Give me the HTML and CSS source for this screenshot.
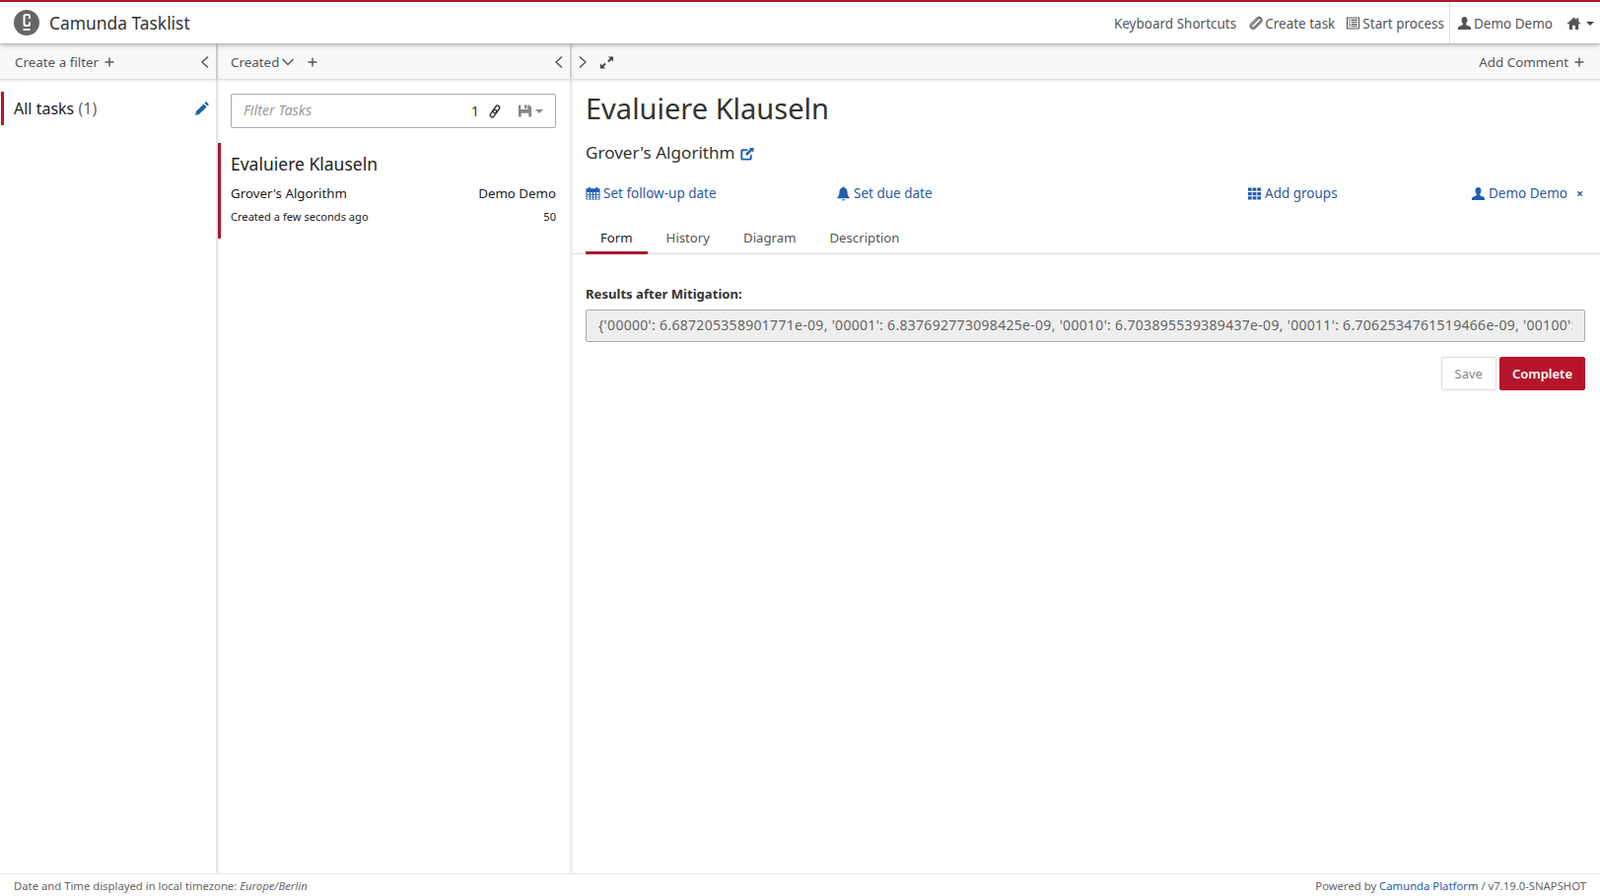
FILE: index.html
```html
<!DOCTYPE html>
<html lang="en">
<head>
  <meta charset="utf-8">
  <meta name="viewport" content="width=device-width, initial-scale=1.0">
  <title>Camunda Tasklist</title>
  <link rel="stylesheet" href="styles.css">
</head>
<body>
  <svg class="sprites" width="0" height="0">
    <symbol id="i-clip" viewBox="0 0 16 16"><g fill="none" stroke="currentColor" stroke-width="1.100"><rect x="-1.500" y="-7" width="3.200" height="13" rx="1.600" transform="translate(8.500 8) rotate(45)"/><rect x="-3.200" y="-7.800" width="6.400" height="15.300" rx="3.200" transform="translate(8.500 8) rotate(45)"/></g></symbol>
    <symbol id="i-list" viewBox="0 0 16 16"><path fill-rule="evenodd" d="M1 1.500h14v13H1zM2.200 2.700v10.600h11.600V2.700z"/><path d="M3.500 4h1.500v1.200H3.500zM6 4h6.500v1.200H6zM3.500 6.300h1.500v1.200H3.500zM6 6.300h6.500v1.200H6zM3.500 8.600h1.500v1.200H3.500zM6 8.600h6.500v1.200H6zM3.500 10.900h1.500v1.200H3.500zM6 10.900h6.500v1.200H6z"/></symbol>
    <symbol id="i-user" viewBox="0 0 16 16"><path d="M8 1c2 0 3.200 1.500 3.200 3.600 0 1.500-.6 3-1.500 3.800v1.200c0 .7 4.800 1.500 5.300 3.400V15H1v-2c.5-1.900 5.300-2.700 5.300-3.400V8.400C5.400 7.600 4.800 6.100 4.800 4.600 4.800 2.500 6 1 8 1z"/></symbol>
    <symbol id="i-home" viewBox="0 0 16 16"><path d="M8 1.500l3 2.800V2.500h2.200v3.900l2.500 2.300H13V15H9.500v-4.500h-3V15H3V8.700H.3z"/></symbol>
    <symbol id="i-pencil" viewBox="0 0 16 16"><path d="M12 1l3 3-1.600 1.600-3-3zM9.600 3.400l3 3-7.400 7.400L1 15l1.200-4.200z"/></symbol>
    <symbol id="i-link" viewBox="0 0 16 16"><g fill="none" stroke="currentColor" stroke-width="1.400"><rect x="-2.100" y="-6.600" width="4.200" height="8.200" rx="2.100" transform="translate(8 8) rotate(35)"/><rect x="-2.100" y="-1.600" width="4.200" height="8.200" rx="2.100" transform="translate(8 8) rotate(35)"/></g></symbol>
    <symbol id="i-save" viewBox="0 0 16 16"><path fill-rule="evenodd" d="M1 1.500h2.500v5h7.500v-5h1.500L15 4v10.500H1zM4 10.500v4h8v-4z"/><path d="M7.500 1.500H10v4H7.500z"/></symbol>
    <symbol id="i-expand" viewBox="0 0 16 16"><path d="M9.500 1.500H15V7l-2-2-2.700 2.700-1.500-1.500L11.500 3.500zM6.500 14.500H1V9l2 2 2.700-2.700 1.500 1.500L4.500 12.500z"/></symbol>
    <symbol id="i-share" viewBox="0 0 16 16"><path d="M3.500 2.500h6.200L8 4.500H4c-.3 0-.5.200-.5.500v7c0 .3.200.5.500.5h7c.3 0 .5-.2.500-.5V9.500l2-2V12.500c0 1.100-.9 2-2 2H3.500c-1.100 0-2-.9-2-2v-8c0-1.100.9-2 2-2z"/><path d="M10.500 1H15.500V6L13.700 4.300 8.500 9.500 6.500 7.500 11.700 2.300z"/></symbol>
    <symbol id="i-calendar" viewBox="0 0 16 16"><path fill-rule="evenodd" d="M3 1h2v1.500h6V1h2v1.500h2.500v12H.5v-12H3zM1.500 6.500v1.800h2.800V6.500zM5.300 6.500v1.800h2.200V6.500zM8.500 6.500v1.800h2.200V6.500zM11.700 6.500v1.800h2.800V6.500zM1.500 9.300v1.800h2.800V9.300zM5.300 9.300v1.800h2.200V9.300zM8.500 9.300v1.800h2.200V9.300zM11.700 9.300v1.800h2.800V9.300zM1.500 12.100v1.500h2.800v-1.500zM5.300 12.100v1.500h2.200v-1.500zM8.500 12.100v1.500h2.200v-1.500zM11.700 12.100v1.500h2.800v-1.500z"/></symbol>
    <symbol id="i-bell" viewBox="0 0 16 16"><path d="M8 .5c.7 0 1.200.5 1.200 1.200 2 .5 3.100 2.200 3.100 4.300 0 3 .7 4.500 2.200 6v1H1.500v-1c1.500-1.500 2.200-3 2.200-6 0-2.100 1.100-3.800 3.100-4.300C6.800 1 7.300.5 8 .5zM6.300 14.200h3.400C9.500 15.100 8.800 15.500 8 15.500s-1.500-.4-1.700-1.300z"/></symbol>
    <symbol id="i-th" viewBox="0 0 16 16"><path d="M1 1.500h4v3.500H1zM6 1.500h4v3.500H6zM11 1.500h4v3.500h-4zM1 6.300h4v3.500H1zM6 6.300h4v3.500H6zM11 6.300h4v3.500h-4zM1 11h4v3.500H1zM6 11h4v3.500H6zM11 11h4v3.500h-4z"/></symbol>
    <symbol id="i-plus" viewBox="0 0 12 12"><path d="M6 1.500v9M1.500 6h9" fill="none" stroke="currentColor" stroke-width="1.400"/></symbol>
    <symbol id="i-left" viewBox="0 0 12 14"><path d="M9 1.500 3 7l6 5.500" fill="none" stroke="currentColor" stroke-width="1.400"/></symbol>
    <symbol id="i-right" viewBox="0 0 12 14"><path d="M3 1.500 9 7l-6 5.500" fill="none" stroke="currentColor" stroke-width="1.400"/></symbol>
    <symbol id="i-down" viewBox="0 0 14 10"><path d="M1.500 2 7 7.500 12.500 2" fill="none" stroke="currentColor" stroke-width="1.500"/></symbol>
  </svg>

  <header class="topbar">
    <div class="brand">
      <svg class="logo" viewBox="0 0 26 26">
        <circle cx="13" cy="13" r="13" fill="#666"/>
        <path d="M16 9V6.500C16 5.500 15.400 5 14.500 5H12c-1 0-1.500.6-1.500 1.500v8c0 1 .6 1.500 1.500 1.500h2.500c1 0 1.500-.6 1.500-1.500V12.500" fill="none" stroke="#fff" stroke-width="2"/>
        <path d="M9.500 20h7" stroke="#fff" stroke-width="1.800"/>
      </svg>
      <span class="brand-name">Camunda Tasklist</span>
    </div>
    <nav class="topnav">
      <a class="topnav-item">Keyboard Shortcuts</a>
      <a class="topnav-item"><svg class="icon"><use href="#i-clip"/></svg>Create task</a>
      <a class="topnav-item topnav-last"><svg class="icon"><use href="#i-list"/></svg>Start process</a>
      <a class="topnav-item topnav-user"><svg class="icon"><use href="#i-user"/></svg>Demo Demo</a>
      <a class="topnav-item topnav-home"><svg class="icon icon-home"><use href="#i-home"/></svg><span class="caret"></span></a>
    </nav>
  </header>

  <main class="columns">
    <section class="col col-filters">
      <div class="toolbar">
        <span class="toolbar-link">Create a filter<svg class="icon-plus"><use href="#i-plus"/></svg></span>
        <svg class="icon-chev"><use href="#i-left"/></svg>
      </div>
      <div class="filter-row">
        <span class="filter-name">All tasks <span class="filter-count">(1)</span></span>
        <svg class="icon icon-edit"><use href="#i-pencil"/></svg>
      </div>
    </section>

    <section class="col col-list">
      <div class="toolbar">
        <span class="toolbar-link">Created<svg class="icon-down"><use href="#i-down"/></svg><svg class="icon-plus icon-plus-gap"><use href="#i-plus"/></svg></span>
        <svg class="icon-chev"><use href="#i-left"/></svg>
      </div>
      <div class="search-wrap">
        <div class="search">
          <span class="search-hint">Filter Tasks</span>
          <span class="search-num">1</span>
          <svg class="icon icon-link"><use href="#i-link"/></svg>
          <svg class="icon icon-save"><use href="#i-save"/></svg>
          <span class="caret caret-light"></span>
        </div>
      </div>
      <article class="task">
        <h3 class="task-title">Evaluiere Klauseln</h3>
        <div class="task-line">
          <span>Grover's Algorithm</span>
          <span>Demo Demo</span>
        </div>
        <div class="task-line task-meta">
          <span>Created a few seconds ago</span>
          <span>50</span>
        </div>
      </article>
    </section>

    <section class="col col-detail">
      <div class="toolbar">
        <span class="toolbar-left">
          <svg class="icon-chev"><use href="#i-right"/></svg>
          <svg class="icon icon-expand"><use href="#i-expand"/></svg>
        </span>
        <span class="toolbar-link">Add Comment<svg class="icon-plus"><use href="#i-plus"/></svg></span>
      </div>
      <div class="detail">
        <h1 class="detail-title">Evaluiere Klauseln</h1>
        <div class="detail-process">Grover's Algorithm<svg class="icon icon-share"><use href="#i-share"/></svg></div>
        <div class="detail-links">
          <a class="link"><svg class="icon"><use href="#i-calendar"/></svg>Set follow-up date</a>
          <a class="link"><svg class="icon icon-bell"><use href="#i-bell"/></svg>Set due date</a>
          <a class="link"><svg class="icon"><use href="#i-th"/></svg>Add groups</a>
          <a class="link"><svg class="icon"><use href="#i-user"/></svg>Demo Demo<span class="link-x">×</span></a>
        </div>
      </div>
      <ul class="tabs">
        <li class="tab tab-active">Form</li>
        <li class="tab">History</li>
        <li class="tab">Diagram</li>
        <li class="tab">Description</li>
      </ul>
      <form class="task-form">
        <label class="form-label" for="results">Results after Mitigation:</label>
        <input class="form-input" id="results" disabled value="{'00000': 6.687205358901771e-09, '00001': 6.837692773098425e-09, '00010': 6.703895539389437e-09, '00011': 6.7062534761519466e-09, '00100': 6.71e-09, '00101': 6.69e-09}">
        <div class="form-actions">
          <button class="btn btn-save" type="button" disabled>Save</button>
          <button class="btn btn-complete" type="button">Complete</button>
        </div>
      </form>
    </section>
  </main>

  <footer class="footer">
    <span>Date and Time displayed in local timezone: <em>Europe/Berlin</em></span>
    <span>Powered by <a class="footer-link">Camunda Platform</a> / v7.19.0-SNAPSHOT</span>
  </footer>
</body>
</html>
```

FILE: styles.css
```css
* {
  box-sizing: border-box;
}

body {
  margin: 0;
  height: 100vh;
  display: flex;
  flex-direction: column;
  overflow: hidden;
  background-color: #fff;
  color: #333;
  font-family: "Noto Sans", sans-serif;
  font-size: 13.500px;
}

.sprites {
  position: absolute;
}

.icon {
  width: 15px;
  height: 15px;
  margin-right: 2px;
  fill: currentColor;
  vertical-align: -3px;
}

.caret {
  display: inline-block;
  width: 0;
  height: 0;
  margin-left: 3px;
  border-top: 4px solid #444;
  border-left: 4px solid transparent;
  border-right: 4px solid transparent;
  vertical-align: 2px;
}

.caret-light {
  border-top-color: #8a8a8a;
}

/* top bar */
.topbar {
  height: 44px;
  flex: none;
  display: flex;
  justify-content: space-between;
  align-items: stretch;
  position: relative;
  z-index: 3;
  background-color: #fff;
  border-top: 2px solid #b5152b;
  box-shadow: 0 1px 5px rgba(0, 0, 0, 0.4);
}

.brand {
  display: flex;
  align-items: center;
  padding-left: 14px;
}

.logo {
  width: 26px;
  height: 26px;
  margin-right: 10px;
}

.brand-name {
  font-size: 17.400px;
  color: #333;
}

.topnav {
  display: flex;
  align-items: center;
  color: #555;
}

.topnav-item {
  height: 100%;
  display: flex;
  align-items: center;
  margin-left: 12px;
  padding-top: 1px;
}

.topnav-last {
  margin-left: 11px;
  padding-right: 5px;
}

.topnav-user {
  margin-left: 0;
  padding-left: 7px;
  border-left: 1px solid #ddd;
}

.topnav-home {
  margin-left: 14px;
  padding-right: 6px;
}

/* columns */
.columns {
  flex: 1;
  min-height: 0;
  display: flex;
}

.col {
  display: flex;
  flex-direction: column;
  min-width: 0;
  background-color: #fff;
}

.col-filters {
  width: 219px;
  flex: none;
  box-shadow: 1px 0 4px rgba(0, 0, 0, 0.16);
  z-index: 2;
}

.col-list {
  width: 357px;
  margin-left: 2px;
  flex: none;
  box-shadow: 1px 0 4px rgba(0, 0, 0, 0.16);
  z-index: 1;
}

.col-detail {
  flex: 1;
  margin-left: 2px;
}

.toolbar {
  height: 36px;
  flex: none;
  display: flex;
  justify-content: space-between;
  align-items: center;
  padding: 2px 5px 0 15px;
  background-color: #f8f8f8;
  color: #555;
  font-size: 13.400px;
  box-shadow: 0 1px 3px rgba(0, 0, 0, 0.2);
}

.col-list .toolbar {
  padding-left: 13px;
}

.col-detail .toolbar {
  padding: 2px 15px 0 5px;
}

.toolbar-left {
  display: flex;
  align-items: center;
}

.toolbar-link {
  display: flex;
  align-items: center;
}

.icon-plus {
  width: 12px;
  height: 12px;
  margin-left: 5px;
}

.icon-plus-gap {
  margin-left: 12px;
}

.icon-chev {
  width: 12px;
  height: 14px;
}

.icon-down {
  width: 14px;
  height: 10px;
  margin-left: 2px;
}

.icon-expand {
  margin: 0 0 0 11px;
  color: #444;
}

/* filters */
.filter-row {
  height: 34px;
  margin: 13px 0 0 1px;
  display: flex;
  justify-content: space-between;
  align-items: center;
  padding: 0 6px 0 10px;
  border-left: 3px solid #b5152b;
  font-size: 16px;
}

.filter-name {
  color: #222;
}

.filter-count {
  color: #666;
}

.icon-edit {
  width: 16px;
  height: 16px;
  margin: 0;
  color: #1f5fae;
}

/* task list */
.search-wrap {
  padding: 15px 14px 0 13px;
}

.search {
  height: 35px;
  display: flex;
  align-items: center;
  padding: 0 12px;
  border: 1px solid #aaa;
  border-radius: 2px;
}

.search-hint {
  flex: 1;
  margin-top: -3px;
  color: #999;
  font-size: 14.300px;
  font-style: italic;
}

.search-num {
  margin-right: 8px;
  color: #333;
  font-size: 14px;
}

.icon-link {
  width: 16px;
  height: 16px;
  margin-right: 15px;
  color: #333;
}

.icon-save {
  margin-right: 0;
  color: #888;
}

.task {
  height: 97px;
  margin-top: 15px;
  padding: 9px 14px 0 10px;
  border-left: 3px solid #a81830;
}

.task-title {
  margin: 0 0 9px;
  font-size: 17.500px;
  font-weight: 400;
  color: #222;
}

.task-line {
  display: flex;
  justify-content: space-between;
  font-size: 13.300px;
  color: #222;
}

.task-meta {
  margin-top: 7px;
  font-size: 11.100px;
}

/* detail */
.detail {
  padding: 0 14px;
}

.detail-title {
  margin: 10px 0 0;
  font-size: 29px;
  line-height: 40px;
  font-weight: 400;
  color: #333;
}

.detail-process {
  margin-top: 13px;
  font-size: 17.100px;
  line-height: 24px;
  color: #333;
}

.detail-process .icon-share {
  width: 15px;
  height: 15px;
  margin-left: 4px;
  color: #1f5fae;
}

.detail-links {
  margin-top: 19px;
  display: grid;
  grid-template-columns: 254px 417px 227px 1fr;
  line-height: 20px;
  white-space: nowrap;
}

.link {
  color: #2c5aa0;
}

.link .icon {
  margin-right: 3px;
  color: #1f5fae;
}

.link-x {
  margin-left: 9px;
  color: #1f5fae;
  font-weight: 700;
  font-size: 12px;
}

.tabs {
  margin: 18px 0 0;
  padding: 0 0 0 14px;
  height: 33px;
  display: flex;
  list-style: none;
  border-bottom: 1px solid #ddd;
  font-size: 13.200px;
}

.tab {
  height: 33px;
  padding: 7px 15px 0;
  margin-right: 4px;
  color: #555;
}

.tab-active {
  color: #222;
  border-bottom: 3px solid #a81830;
}

/* form */
.task-form {
  padding: 31px 15px 0 14px;
  display: flex;
  flex-direction: column;
}

.form-label {
  margin-bottom: 7px;
  font-size: 13.100px;
  font-weight: 700;
  color: #333;
}

.form-input {
  width: 100%;
  height: 33px;
  padding: 0 12px 2px;
  border: 1px solid #aaa;
  border-radius: 2px;
  background-color: #eee;
  color: #666;
  font-family: "Noto Sans", sans-serif;
  font-size: 14px;
  letter-spacing: 0.3px;
}

.form-actions {
  margin-top: 15px;
  display: flex;
  justify-content: flex-end;
  gap: 3px;
}

.btn {
  height: 34px;
  padding: 0 13px;
  border-radius: 2px;
  font-family: "Noto Sans", sans-serif;
  font-size: 13px;
}

.btn-save {
  border: 1px solid #ddd;
  background-color: #fff;
  color: #888;
}

.btn-complete {
  padding: 0 12px;
  border: 1px solid #b5152b;
  background-color: #b5152b;
  color: #fff;
  font-weight: 600;
}

/* footer */
.footer {
  height: 23px;
  flex: none;
  display: flex;
  justify-content: space-between;
  align-items: center;
  padding: 0 14px;
  background-color: #fff;
  border-top: 1px solid #e8e8e8;
  color: #666;
  font-size: 11.300px;
  position: relative;
  z-index: 3;
}

.footer-link {
  color: #2c5aa0;
}
```
